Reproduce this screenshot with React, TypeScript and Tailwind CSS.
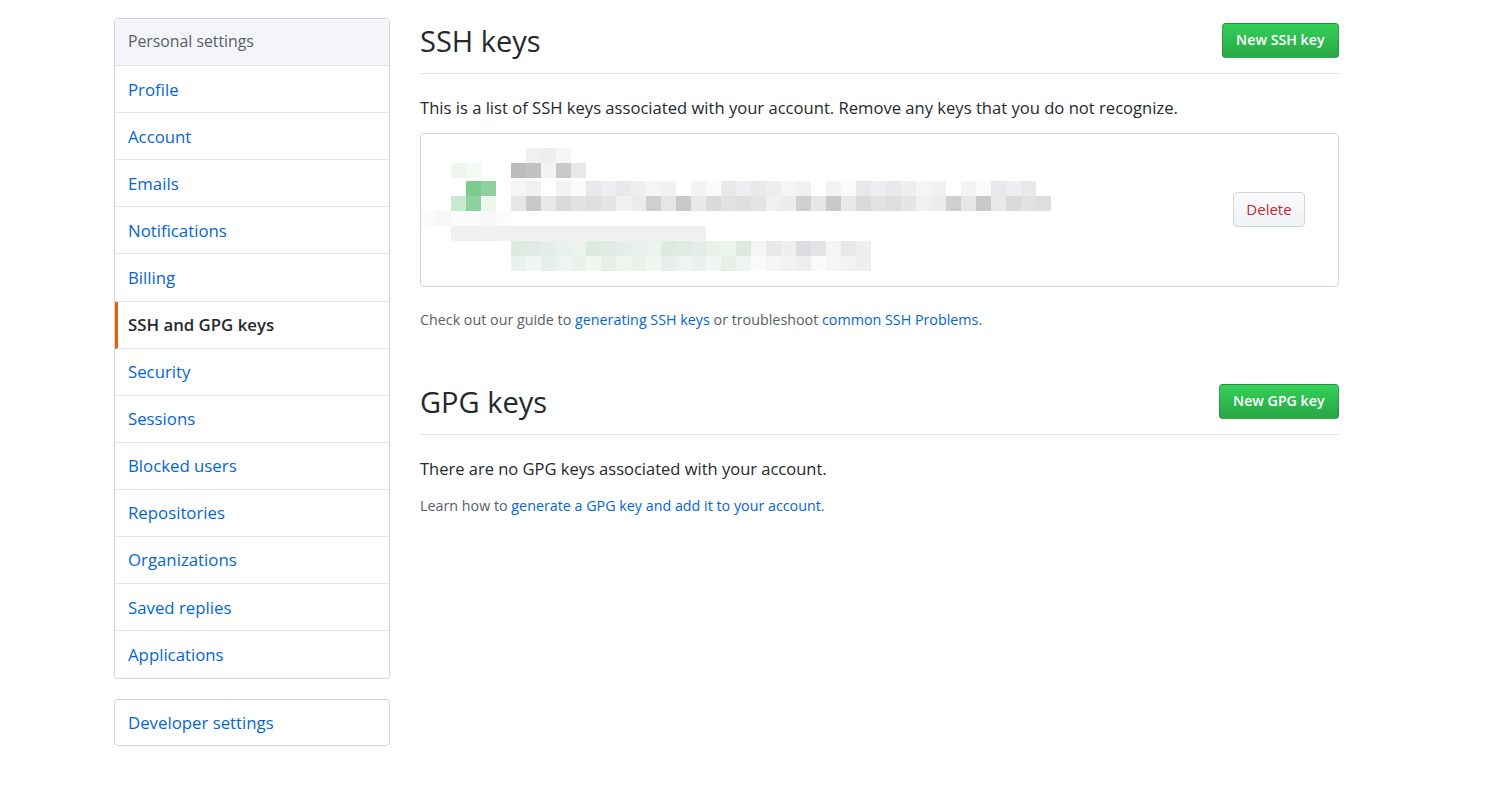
import React from 'react';

const menu = [
  'Profile',
  'Account',
  'Emails',
  'Notifications',
  'Billing',
  'SSH and GPG keys',
  'Security',
  'Sessions',
  'Blocked users',
  'Repositories',
  'Organizations',
  'Saved replies',
  'Applications',
];

// rough mosaic of the blurred key (box-relative coords, 15px cells)
type Run = { y: number; x0: number; x1: number; colors: string[] };

const runs: Run[] = [
  { y: 14, x0: 105, x1: 150, colors: ['#f1f0f0', '#eeeeee', '#f6f6f6'] },
  { y: 29, x0: 30, x1: 60, colors: ['#f3f9f3', '#eef7ee'] },
  { y: 29, x0: 90, x1: 165, colors: ['#f2f2f2', '#bdbdc0', '#c9c9c9', '#c2c2c5', '#e6e8ea'] },
  { y: 47, x0: 45, x1: 75, colors: ['#8fd19e', '#7acb8c'] },
  { y: 47, x0: 90, x1: 615, colors: ['#eceef0', '#f1f1f1', '#e8e8ea', '#f5f5f5', '#fafafa', '#eeeeee', '#f3f3f3', '#e9e9eb', '#ffffff'] },
  { y: 62, x0: 30, x1: 75, colors: ['#c7e9cf', '#8fd19e', '#eef7ee'] },
  { y: 62, x0: 90, x1: 630, colors: ['#e5e5e7', '#cfcfd2', '#e9e9ea', '#dedee0', '#ececee', '#c9c9cc', '#e2e2e4', '#f0f0f1', '#e6e6e8', '#dadadc'] },
  { y: 77, x0: 0, x1: 90, colors: ['#fafafa', '#f7f7f7', '#fbfbfb'] },
  { y: 92, x0: 30, x1: 285, colors: ['#f3f3f4', '#d8d8da', '#e9ebee', '#f0f0f2', '#ececed', '#e6e6e8', '#f4f4f4'] },
  { y: 107, x0: 90, x1: 330, colors: ['#eaf3ec', '#e3efe6', '#dcebe0', '#e8f1ea', '#e0ece3'] },
  { y: 107, x0: 330, x1: 450, colors: ['#f5f5f5', '#dcdde0', '#e8e7e9', '#e4e4e6', '#efefef'] },
  { y: 122, x0: 90, x1: 330, colors: ['#f2f6f2', '#eaf2ec', '#eef4ef', '#e6efe8'] },
  { y: 122, x0: 330, x1: 450, colors: ['#fafafa', '#eeeeef', '#f2f2f2', '#f6f6f6'] },
];

function KeyMosaic() {
  const cells: React.ReactElement[] = [];
  runs.forEach((r, ri) => {
    let i = 0;
    for (let x = r.x0; x < r.x1; x += 15) {
      const c = r.colors[(i * 7 + ri * 3) % r.colors.length];
      cells.push(<rect key={`${ri}-${x}`} x={x} y={r.y} width={15} height={15} fill={c} />);
      i++;
    }
  });
  return (
    <svg width="640" height="152" viewBox="0 0 640 152" className="block">
      {cells}
    </svg>
  );
}

function GreenButton({ children }: { children: React.ReactNode }) {
  return (
    <button className="h-[35px] px-[13.5px] rounded-[4px] border border-[rgba(27,31,35,0.2)] bg-gradient-to-b from-[#34d058] to-[#28a745] text-white text-[14.2px] font-semibold leading-none">
      {children}
    </button>
  );
}

export default function App() {
  return (
    <div
      className="min-h-screen bg-white text-[#24292e]"
      style={{ fontFamily: '"Open Sans", "Noto Sans", Arial, sans-serif' }}
    >
      <div className="flex gap-[30px] pl-[114px] pt-[18px]">
        {/* sidebar */}
        <div className="w-[276px] shrink-0">
          <nav className="border border-[#d1d5da] rounded-[4px] overflow-hidden">
            <div className="h-[47.1px] flex items-center px-[13px] bg-[#f3f5f8] border-b border-[#e1e4e8] text-[15.8px] text-[#586069]">
              Personal settings
            </div>
            {menu.map((item, i) => {
              const active = item === 'SSH and GPG keys';
              return (
                <div
                  key={item}
                  className={
                    'h-[47.1px] flex items-center px-[13px] text-[16.8px] ' +
                    (i < menu.length - 1 ? 'border-b border-[#e1e4e8] ' : '') +
                    (active
                      ? 'text-[#24292e] font-semibold border-l-[3px] border-l-[#e36209] pl-[10px]'
                      : 'text-[#0366d6]')
                  }
                >
                  {item}
                </div>
              );
            })}
          </nav>
          <div className="mt-[19.5px] border border-[#d1d5da] rounded-[4px] h-[47.5px] flex items-center px-[13px] text-[16.8px] text-[#0366d6]">
            Developer settings
          </div>
        </div>

        {/* main */}
        <div className="w-[919px]">
          <div className="flex items-center justify-between pt-[5px] pb-[15px] border-b border-[#e1e4e8]">
            <h2 className="text-[29px] font-normal leading-[34px]">SSH keys</h2>
            <GreenButton>New SSH key</GreenButton>
          </div>
          <p className="mt-[22px] text-[16.6px] leading-[24px]">
            This is a list of SSH keys associated with your account. Remove any keys that you do not recognize.
          </p>
          <div className="mt-[13px] h-[154px] border border-[#d1d5da] rounded-[4px] flex items-center justify-between pr-[33px]">
            <KeyMosaic />
            <button className="h-[35px] w-[72px] -mt-[2px] rounded-[4px] border border-[#d1d5da] bg-gradient-to-b from-[#fafbfc] to-[#eff3f6] text-[#cb2431] text-[15px]">
              Delete
            </button>
          </div>
          <p className="mt-[23px] text-[14.3px] leading-[20px] text-[#586069]">
            Check out our guide to <a className="text-[#0366d6]">generating SSH keys</a> or troubleshoot{' '}
            <a className="text-[#0366d6]">common SSH Problems</a>.
          </p>

          <div className="mt-[54px] flex items-center justify-between pb-[15px] border-b border-[#e1e4e8]">
            <h2 className="text-[29px] font-normal leading-[34px]">GPG keys</h2>
            <GreenButton>New GPG key</GreenButton>
          </div>
          <p className="mt-[22px] text-[16.5px] leading-[24px]">There are no GPG keys associated with your account.</p>
          <p className="mt-[15px] text-[14.3px] leading-[20px] text-[#586069]">
            Learn how to <a className="text-[#0366d6]">generate a GPG key and add it to your account</a>.
          </p>
        </div>
      </div>
    </div>
  );
}
